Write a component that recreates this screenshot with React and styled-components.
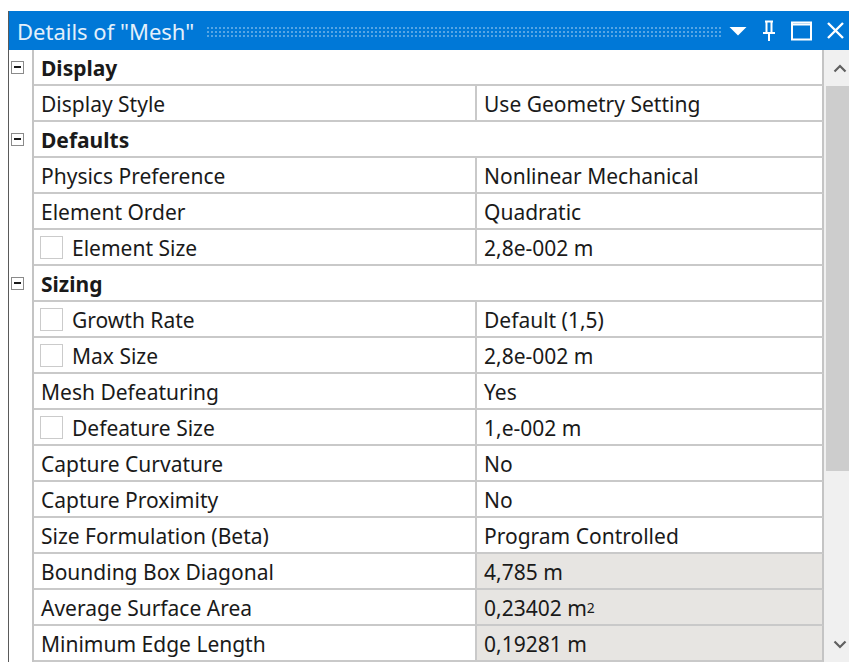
import React from "react";
import styled, { createGlobalStyle } from "styled-components";

const GlobalStyle = createGlobalStyle`
  html, body {
    margin: 0;
    padding: 0;
    background: #ffffff;
    overflow: hidden;
  }
  body {
    font-family: "Noto Sans", "Segoe UI", sans-serif;
  }
`;

const Page = styled.div`
  width: 849px;
  height: 662px;
  padding: 11px 0 0 8px;
  box-sizing: border-box;
  overflow: hidden;
`;

const Panel = styled.div`
  width: 841px;
  height: 651px;
  border-left: 1px solid #5a5a5a;
  display: flex;
  flex-direction: column;
  box-sizing: border-box;
`;

const TitleBar = styled.div`
  height: 39px;
  flex: none;
  background: #0078d7;
  display: flex;
  align-items: center;
  padding-left: 8px;
  gap: 12px;
`;

const Title = styled.span`
  color: #e3f0fb;
  font-size: 22px;
  white-space: nowrap;
  margin-top: 1px;
`;

const Grip = styled.div`
  flex: 1;
  height: 12px;
  margin-top: 2px;
  background-image: radial-gradient(circle, rgba(255, 255, 255, 0.35) 0.7px, transparent 1px);
  background-size: 4px 4px;
`;

const Tools = styled.div`
  display: flex;
  align-items: center;
  gap: 14px;
  padding-right: 4px;
  margin-left: -4px;
`;

const Body = styled.div`
  flex: 1;
  display: flex;
  min-height: 0;
`;

const Grid = styled.div`
  width: 815px;
  flex: none;
  display: flex;
  flex-direction: column;
`;

const Row = styled.div`
  height: 36px;
  flex: none;
  display: flex;
`;

const Gutter = styled.div`
  width: 25px;
  flex: none;
  border-right: 2px solid #c4c4c4;
  display: flex;
  align-items: center;
  padding-left: 2px;
  box-sizing: border-box;
`;

const Toggle = styled.div`
  width: 11px;
  height: 11px;
  border: 1px solid #8a8a8a;
  background: #fff;
  display: flex;
  align-items: center;
  justify-content: center;
  margin-top: -2px;
  &::after {
    content: "";
    width: 7px;
    height: 2px;
    background: #1a1a1a;
  }
`;

const Cell = styled.div`
  box-sizing: border-box;
  height: 36px;
  border-bottom: 2px solid #c9c9c9;
  display: flex;
  align-items: center;
  padding-top: 2px;
  font-size: 21px;
  color: #1a1a1a;
  white-space: nowrap;
  background: ${(p) => (p.$readonly ? "#e7e5e2" : "#ffffff")};
`;

const NameCell = styled(Cell)`
  width: 443px;
  flex: none;
  padding-left: ${(p) => (p.$check ? "6px" : "7px")};
  border-right: 2px solid #c9c9c9;
`;

const ValueCell = styled(Cell)`
  flex: 1;
  padding-left: 7px;
  border-right: 2px solid #c4c4c4;
`;

const GroupCell = styled(Cell)`
  flex: 1;
  padding-left: 7px;
  font-weight: 700;
  border-right: 2px solid #c4c4c4;
`;

const Check = styled.span`
  width: 21px;
  height: 21px;
  border: 1px solid #cbcbcb;
  background: #fff;
  margin-right: 9px;
  margin-top: -2px;
  flex: none;
`;

const ScrollBar = styled.div`
  flex: 1;
  display: flex;
  flex-direction: column;
  background: #f0f0f0;
`;

const ArrowButton = styled.div`
  height: 36px;
  flex: none;
  display: flex;
  align-items: center;
  justify-content: center;
  padding-left: 6px;
`;

const Thumb = styled.div`
  height: 385px;
  flex: none;
  background: #cdcdcd;
  margin-left: 2px;
`;

const Track = styled.div`
  flex: 1;
`;

const Sup = styled.sup`
  font-size: 14px;
  line-height: 0;
  vertical-align: 9px;
`;

const rows = [
  { group: "Display" },
  { name: "Display Style", value: "Use Geometry Setting" },
  { group: "Defaults" },
  { name: "Physics Preference", value: "Nonlinear Mechanical" },
  { name: "Element Order", value: "Quadratic" },
  { name: "Element Size", value: "2,8e-002 m", check: true },
  { group: "Sizing" },
  { name: "Growth Rate", value: "Default (1,5)", check: true },
  { name: "Max Size", value: "2,8e-002 m", check: true },
  { name: "Mesh Defeaturing", value: "Yes" },
  { name: "Defeature Size", value: "1,e-002 m", check: true },
  { name: "Capture Curvature", value: "No" },
  { name: "Capture Proximity", value: "No" },
  { name: "Size Formulation (Beta)", value: "Program Controlled" },
  { name: "Bounding Box Diagonal", value: "4,785 m", readonly: true },
  {
    name: "Average Surface Area",
    value: (
      <>
        0,23402 m<Sup>2</Sup>
      </>
    ),
    readonly: true,
  },
  { name: "Minimum Edge Length", value: "0,19281 m", readonly: true },
];

const DropIcon = () => (
  <svg width="18" height="10" viewBox="0 0 18 10">
    <path d="M0.5 1h17L9 9.5z" fill="#fff" />
  </svg>
);

const PinIcon = () => (
  <svg width="16" height="22" viewBox="0 0 16 22">
    <path
      d="M4 1.5h8M5.5 1.5v11M10.5 1.5v11M2 13h12M8 13v8"
      stroke="#fff"
      strokeWidth="2"
      fill="none"
    />
  </svg>
);

const MaxIcon = () => (
  <svg width="21" height="20" viewBox="0 0 21 20">
    <rect x="1" y="1.5" width="19" height="17" stroke="#fff" strokeWidth="2" fill="none" />
    <path d="M1 3.5h19" stroke="#fff" strokeWidth="2" />
  </svg>
);

const CloseIcon = () => (
  <svg width="19" height="19" viewBox="0 0 19 19">
    <path d="M2 2l15 15M17 2L2 17" stroke="#fff" strokeWidth="2.4" />
  </svg>
);

const Chevron = ({ down }) => (
  <svg width="14" height="9" viewBox="0 0 14 9">
    <path
      d={down ? "M1.5 1.5L7 7l5.5-5.5" : "M1.5 7.5L7 2l5.5 5.5"}
      stroke="#606060"
      strokeWidth="2.2"
      fill="none"
    />
  </svg>
);

export default function App() {
  return (
    <>
      <GlobalStyle />
      <Page>
        <Panel>
          <TitleBar>
            <Title>Details of "Mesh"</Title>
            <Grip />
            <Tools>
              <DropIcon />
              <PinIcon />
              <MaxIcon />
              <CloseIcon />
            </Tools>
          </TitleBar>
          <Body>
            <Grid>
              {rows.map((r, i) => (
                <Row key={i}>
                  <Gutter>{r.group && <Toggle />}</Gutter>
                  {r.group ? (
                    <GroupCell>{r.group}</GroupCell>
                  ) : (
                    <>
                      <NameCell $check={r.check} $readonly={false}>
                        {r.check && <Check />}
                        {r.name}
                      </NameCell>
                      <ValueCell $readonly={r.readonly}>{r.value}</ValueCell>
                    </>
                  )}
                </Row>
              ))}
            </Grid>
            <ScrollBar>
              <ArrowButton>
                <Chevron />
              </ArrowButton>
              <Thumb />
              <Track />
              <ArrowButton>
                <Chevron down />
              </ArrowButton>
            </ScrollBar>
          </Body>
        </Panel>
      </Page>
    </>
  );
}
